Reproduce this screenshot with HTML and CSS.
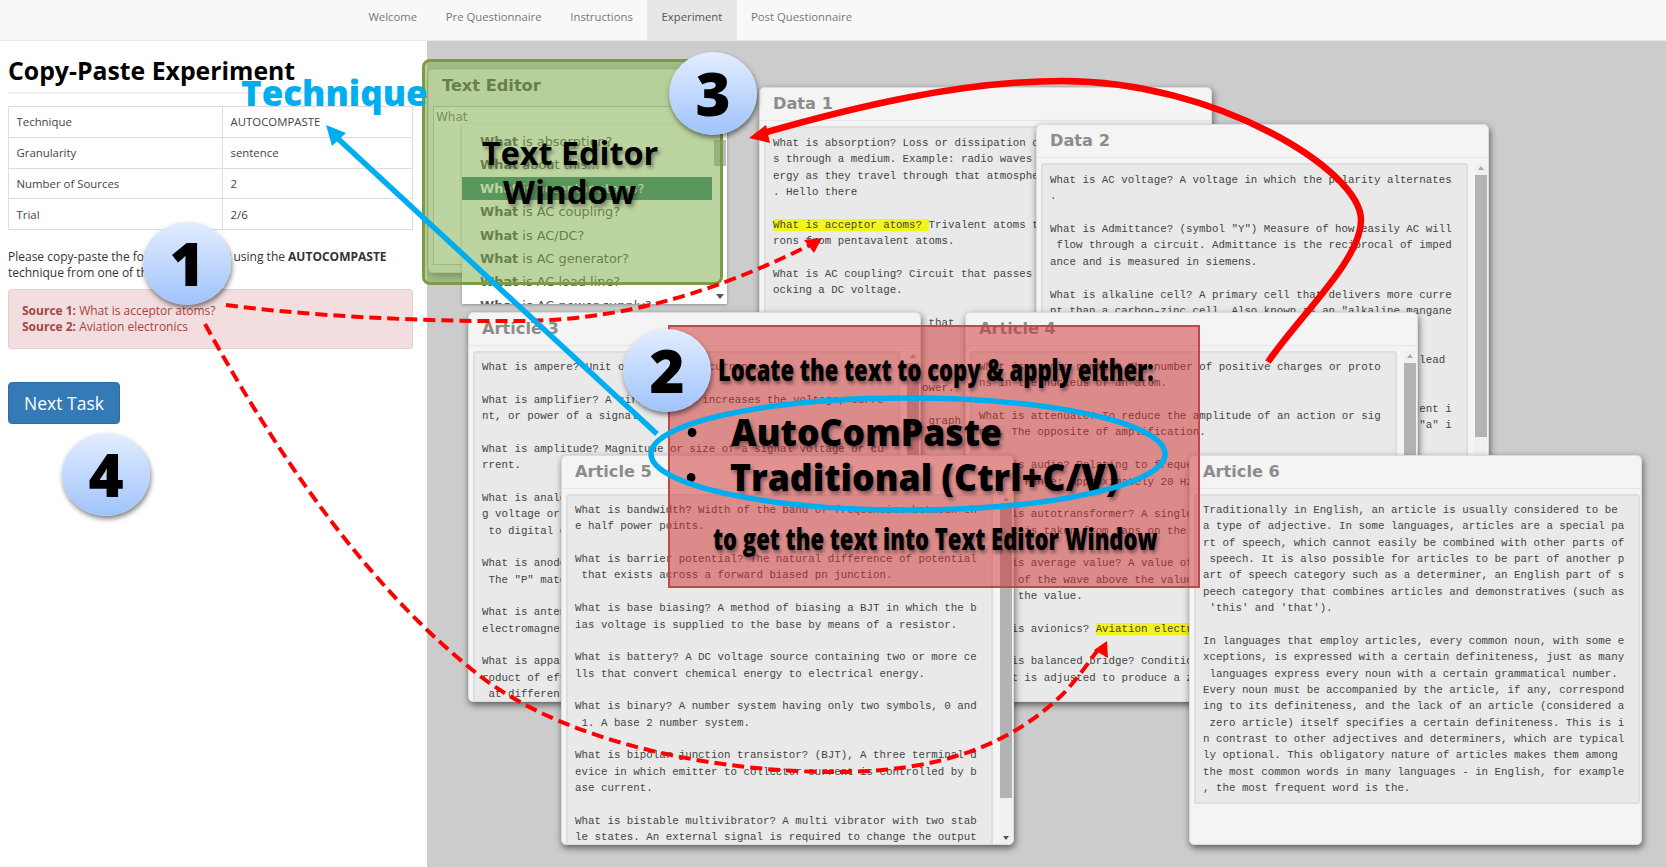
FILE: index.html
```
<!DOCTYPE html>
<html lang="en">
<head>
<meta charset="utf-8">
<title>Copy-Paste Experiment</title>
<link rel="stylesheet" href="styles.css">
</head>
<body>
<div class="page">
  <nav class="nav">
    <ul class="nav-list">
      <li class="nav-item">Welcome</li>
      <li class="nav-item">Pre Questionnaire</li>
      <li class="nav-item">Instructions</li>
      <li class="nav-item active">Experiment</li>
      <li class="nav-item">Post Questionnaire</li>
    </ul>
  </nav>
  <div class="main">
    <aside class="side">
      <h2 class="title">Copy-Paste Experiment</h2>
      <table class="info">
        <tr><td class="c1">Technique</td><td>AUTOCOMPASTE</td></tr>
        <tr><td class="c1">Granularity</td><td>sentence</td></tr>
        <tr><td class="c1">Number of Sources</td><td>2</td></tr>
        <tr><td class="c1">Trial</td><td>2/6</td></tr>
      </table>
      <p class="intro">Please copy-paste the following texts by using the <b>AUTOCOMPASTE</b><br>technique from one of the two sources.</p>
      <div class="alert"><b>Source 1:</b> What is acceptor atoms?<br><b>Source 2:</b> Aviation electronics</div>
      <button class="btn">Next Task</button>
    </aside>
    <div class="desk"></div>
  </div>

  <section class="win w-data1">
    <div class="win-head">Data 1</div>
    <div class="win-body"><div class="doc"><pre>What is absorption? Loss or dissipation of energy as it travel
s through a medium. Example: radio waves lose some of their en
ergy as they travel through that atmosphere, especially ionized
. Hello there

<mark>What is acceptor atoms? </mark>Trivalent atoms that can accept elect
rons from pentavalent atoms.

What is AC coupling? Circuit that passes an AC signal while bl
ocking a DC voltage.

What is active? Circuit that
needs energy.

What is active filter?
a circuit changing in power.

What is AC bar chart or graph</pre></div><div class="sb"></div></div>
  </section>

  <section class="win w-data2">
    <div class="win-head">Data 2</div>
    <div class="win-body"><div class="doc"><pre>What is AC voltage? A voltage in which the polarity alternates
.

What is Admittance? (symbol "Y") Measure of how easily AC will
 flow through a circuit. Admittance is the reciprocal of imped
ance and is measured in siemens.

What is alkaline cell? A primary cell that delivers more curre
nt than a carbon-zinc cell. Also known as an "alkaline mangane
se cell".

What is alligator clip? A spring-loaded clip on a test's lead


What is alternating current? The flow of electrical  current i
n which charge reverses direction. Also written "AC" and "a" i</pre></div><div class="sb sb-long"><i class="up"></i></div></div>
  </section>

  <section class="win w-art3">
    <div class="win-head">Article 3</div>
    <div class="win-body"><div class="doc"><pre>What is ampere? Unit of electrical current.

What is amplifier? A circuit that increases the voltage, curre
nt, or power of a signal.

What is amplitude? Magnitude or size of a signal voltage or cu
rrent.

What is analog-to-digital converter? Circuit which changes an
g voltage or current
 to digital output.

What is anode? Positive electrode of a device.
 The "P" material of a diode.

What is antenna? Device that radiates or receives
electromagnetic waves.

What is apparent power? The product of
roduct of effective voltage and current
 at different phase.</pre></div><div class="sb"><i class="up"></i></div></div>
  </section>

  <section class="win w-art4">
    <div class="win-head">Article 4</div>
    <div class="win-body"><div class="doc"><pre>What is atomic number? The number of positive charges or proto
ns in the nucleus of an atom.

What is attenuate? To reduce the amplitude of an action or sig
nal. The opposite of amplification.

What is audio? Relating to frequencies
in the range: Approximately 20 Hz

What is autotransformer? A single
Output is taken from taps on the

What is average value? A value of
      of the wave above the value
      the value.

What is avionics? <mark>Aviation electronics</mark>

What is balanced bridge? Condition
Output is adjusted to produce a zero</pre></div><div class="sb"><i class="up"></i></div></div>
  </section>

  <section class="win w-art5">
    <div class="win-head">Article 5</div>
    <div class="win-body"><div class="doc"><pre>What is bandwidth? Width of the band of frequencies between th
e half power points.

What is barrier potential? The natural difference of potential
 that exists across a forward biased pn junction.

What is base biasing? A method of biasing a BJT in which the b
ias voltage is supplied to the base by means of a resistor.

What is battery? A DC voltage source containing two or more ce
lls that convert chemical energy to electrical energy.

What is binary? A number system having only two symbols, 0 and
 1. A base 2 number system.

What is bipolar junction transistor? (BJT), A three terminal d
evice in which emitter to collector current is controlled by b
ase current.

What is bistable multivibrator? A multi vibrator with two stab
le states. An external signal is required to change the output</pre></div><div class="sb sb-art5"><i class="up"></i><i class="down"></i></div></div>
  </section>

  <section class="win w-art6">
    <div class="win-head">Article 6</div>
    <div class="win-body"><div class="doc doc-short"><pre>Traditionally in English, an article is usually considered to be
a type of adjective. In some languages, articles are a special pa
rt of speech, which cannot easily be combined with other parts of
 speech. It is also possible for articles to be part of another p
art of speech category such as a determiner, an English part of s
peech category that combines articles and demonstratives (such as
 'this' and 'that').

In languages that employ articles, every common noun, with some e
xceptions, is expressed with a certain definiteness, just as many
 languages express every noun with a certain grammatical number.
Every noun must be accompanied by the article, if any, correspond
ing to its definiteness, and the lack of an article (considered a
 zero article) itself specifies a certain definiteness. This is i
n contrast to other adjectives and determiners, which are typical
ly optional. This obligatory nature of articles makes them among
the most common words in many languages - in English, for example
, the most frequent word is the.</pre></div></div>
  </section>

  <section class="editor">
    <div class="win-head">Text Editor</div>
    <div class="editor-area">What</div>
  </section>
  <ul class="popup">
    <li><b>What</b> is absorption?</li>
    <li><b>What</b> about this...</li>
    <li class="sel"><b>What</b> is acceptor atoms?</li>
    <li><b>What</b> is AC coupling?</li>
    <li><b>What</b> is AC/DC?</li>
    <li><b>What</b> is AC generator?</li>
    <li><b>What</b> is AC load line?</li>
    <li><b>What</b> is AC power supply?</li>
    <li class="pop-thumb"></li>
    <li class="pop-down"></li>
  </ul>
  <div class="green"></div>
  <div class="redbox"></div>

  <div class="label label-tech">Technique</div>
  <div class="label label-te1">Text Editor</div>
  <div class="label label-te2">Window</div>
  <div class="label label-locate">Locate the text to copy &amp; apply either:</div>
  <ul class="methods">
    <li class="label label-auto">AutoComPaste</li>
    <li class="label label-trad">Traditional (Ctrl+C/V)</li>
  </ul>
  <div class="label label-get">to get the text into Text Editor Window</div>

  <svg class="arrows" width="1666" height="867" viewBox="0 0 1666 867" aria-hidden="true">
    <path class="solid" d="M1268 362C1300 315 1361 260 1361 220C1361 170 1215 81 1063 81C960 81 850 108 760 134"/>
    <polygon class="fill-red" points="749,138 766,125 770,143"/>
    <path class="dash" d="M226 305C300 315 420 322 520 321C610 320 700 300 812 244"/>
    <polygon class="fill-red" points="822,238 804,240 814,253"/>
    <path class="dash" d="M205 324C280 460 370 590 480 676C570 745 720 772 835 772C940 772 1010 745 1063 694C1080 676 1090 660 1098 650"/>
    <polygon class="fill-red" points="1107,641 1094,650 1108,658"/>
    <line class="blue" x1="657" y1="434" x2="334" y2="135"/>
    <polygon class="fill-blue" points="326,125 346,133 332,146"/>
    <ellipse class="blue" cx="908" cy="454" rx="257" ry="56"/>
  </svg>

  <div class="step step-1">1</div>
  <div class="step step-2">2</div>
  <div class="step step-3">3</div>
  <div class="step step-4">4</div>
</div>
</body>
</html>
```
FILE: styles.css
```
* { box-sizing: border-box; }
html, body { margin: 0; padding: 0; }
body { font-family: "Open Sans", "Liberation Sans", sans-serif; font-size: 12px; color: #333; background: #fff; }
.page { position: relative; width: 1666px; height: 867px; overflow: hidden; display: flex; flex-direction: column; }

.nav { height: 41px; flex: none; background: #f8f8f8; border-bottom: 1px solid #e7e7e7; }
.nav-list { list-style: none; margin: 0 0 0 354px; padding: 0; display: flex; height: 40px; }
.nav-item { padding: 0 14.4px; line-height: 34px; font-size: 11.3px; color: #777; }
.nav-item.active { background: #e7e7e7; color: #555; }

.main { flex: 1; display: flex; min-height: 0; }
.side { width: 427px; flex: none; padding: 0 14px 0 8px; background: #fff; }
.desk { flex: 1; background: #ccc; }

.title { margin: 13px 0 12px; padding-bottom: 7px; height: 40px; border-bottom: 2px solid #eee; font-size: 24.8px; line-height: 33px; font-weight: 700; color: #000; }
.info { width: 405px; border-collapse: collapse; table-layout: fixed; }
.info td { height: 30.75px; padding: 0 7.5px; border: 1px solid #ddd; font-size: 11.4px; color: #444; }
.info .c1 { width: 214px; }
.intro { margin: 19px 0 8px; font-size: 12px; line-height: 16px; color: #333; }
.alert { width: 405px; height: 60px; padding: 13px 13px 0; background: #f2dede; border: 1px solid #ebccd1; border-radius: 3px; color: #a94442; line-height: 15.5px; font-size: 12px; }
.btn { display: block; margin-top: 33px; width: 112px; height: 42px; padding: 0; background: #337ab7; border: 1px solid #2e6da4; border-radius: 4px; color: #fff; font: 400 17.5px "Open Sans", sans-serif; }

.win { position: absolute; width: 453px; height: 390px; background: #f4f4f4; border: 1px solid #dcdcdc; border-radius: 5px; box-shadow: 1px 3px 7px rgba(0,0,0,.55); overflow: hidden; }
.w-data1 { left: 759px; top: 87px; }
.w-data2 { left: 1036px; top: 124px; }
.w-art3 { left: 468px; top: 312px; }
.w-art4 { left: 965px; top: 312px; }
.w-art5 { left: 561px; top: 455px; }
.w-art6 { left: 1189px; top: 455px; }
.win-head { height: 33px; padding: 0 13px; border-bottom: 1px solid #e6e6e6; font: 700 16.2px/31px "DejaVu Sans", sans-serif; color: #8c8c8c; }
.win-body { display: flex; padding: 5px 1px 0 4px; height: 355px; }
.doc { flex: 1; min-width: 0; height: 500px; padding: 6px 6px 0 7px; background: #e9e9e9; border: 2px solid #dedede; border-radius: 3px; overflow: hidden; }
.w-data1 .doc, .w-data2 .doc { padding-top: 7px; }
.doc-short { height: 310px; }
.doc pre { margin: 0; font: 10.8px/16.36px "Liberation Mono", monospace; color: #444; }
.doc mark { background: #f4f41a; color: #444; }
.sb { position: relative; width: 12px; flex: none; margin-left: 7px; height: 100%; background: #f0f0f0; }
.sb::after { content: ""; position: absolute; left: 0; right: 0; top: 12px; height: 400px; background: #b3b3b3; }
.sb-long::after { height: 262px; }
.sb-art5::after { top: 9px; height: 295px; }
.up, .down { position: absolute; left: 3px; width: 0; height: 0; border-left: 3px solid transparent; border-right: 3px solid transparent; }
.up { top: 3px; border-bottom: 4px solid #aaa; }
.down { bottom: 4px; border-top: 4px solid #555; }

.editor { position: absolute; left: 428px; top: 69px; width: 290px; height: 204px; background: #f4f4f4; border: 1px solid #ddd; border-radius: 4px; box-shadow: 1px 3px 7px rgba(0,0,0,.4); color: #666; }
.editor .win-head { font-size: 16.2px; color: #555; padding-left: 13px; height: 36px; line-height: 31px; border-bottom: 0; }
.editor-area { margin: 0 4px; height: 159px; padding: 3px 2px; background: #fff; border: 1px solid #c4c4c4; font: 12px "DejaVu Sans", sans-serif; color: #777; }

.popup { position: absolute; left: 462px; top: 124px; width: 265px; height: 180px; margin: 0; padding: 6px 0 0; list-style: none; background: #fff; box-shadow: 0 1px 3px rgba(0,0,0,.3); overflow: hidden; font: 12.9px/23.4px "DejaVu Sans", sans-serif; color: #555; }
.popup li { height: 23.4px; padding-left: 18px; width: 250px; }
.popup .sel { background: #3b8577; color: #fff; }
.popup .pop-thumb { position: absolute; left: 252px; top: 16px; width: 12px; height: 26px; padding: 0; background: #bbb; }
.popup .pop-down { position: absolute; left: 254px; top: 170px; width: 0; height: 0; padding: 0; border-left: 4px solid transparent; border-right: 4px solid transparent; border-top: 5px solid #555; }

.green { position: absolute; left: 422px; top: 59px; width: 301px; height: 226px; background: rgba(121,169,65,.5); border: 3px solid #7c9b47; border-radius: 8px; }
.redbox { position: absolute; left: 668px; top: 325px; width: 532px; height: 263px; background: rgba(208,46,46,.5); border: 2px solid #bb4a4a; }

.label { position: absolute; white-space: nowrap; font-weight: 700; color: #000; text-shadow: 2px 3px 4px rgba(0,0,0,.4); transform-origin: 0 50%; list-style: none; }
.label-tech { left: 241px; top: 68px; font-size: 36px; line-height: 50px; font-weight: 800; color: #00aeef; text-shadow: none; transform: scaleX(.97); }
.label-te1 { left: 482px; top: 130px; font-size: 33px; line-height: 46px; transform: scaleX(.98); }
.label-te2 { left: 503px; top: 169px; font-size: 33px; line-height: 46px; }
.label-locate { left: 718px; top: 348px; font-size: 30px; line-height: 44px; font-weight: 800; transform: scaleX(.733); }
.methods { margin: 0; padding: 0; list-style: none; }
.label-auto { left: 731px; top: 407px; font-size: 37px; line-height: 50px; font-weight: 800; transform: scaleX(.96); }
.label-trad { left: 730px; top: 452px; font-size: 37px; line-height: 50px; font-weight: 800; transform: scaleX(.96); }
.label-auto::before, .label-trad::before { content: ""; position: absolute; left: -45px; top: 21px; width: 9px; height: 9px; border-radius: 50%; background: #000; }
.label-get { left: 713px; top: 517px; font-size: 30px; line-height: 44px; font-weight: 800; transform: scaleX(.733); }

.arrows { position: absolute; left: 0; top: 0; pointer-events: none; }
.solid { fill: none; stroke: #f00; stroke-width: 6.5; }
.dash { fill: none; stroke: #f00; stroke-width: 4; stroke-dasharray: 12 6; }
.fill-red { fill: #f00; }
.blue { fill: none; stroke: #00aeef; stroke-width: 5.5; }
.fill-blue { fill: #00aeef; }

.step { position: absolute; width: 88px; height: 83px; border-radius: 50%; background: linear-gradient(#e3edff, #9fc3fb); box-shadow: 1px 3px 5px rgba(0,0,0,.5); font-size: 60px; font-weight: 800; line-height: 83px; text-align: center; color: #000; }
.step-1 { left: 143px; top: 222px; }
.step-2 { left: 623px; top: 329px; }
.step-3 { left: 669px; top: 52px; }
.step-4 { left: 62px; top: 433px; }
```
